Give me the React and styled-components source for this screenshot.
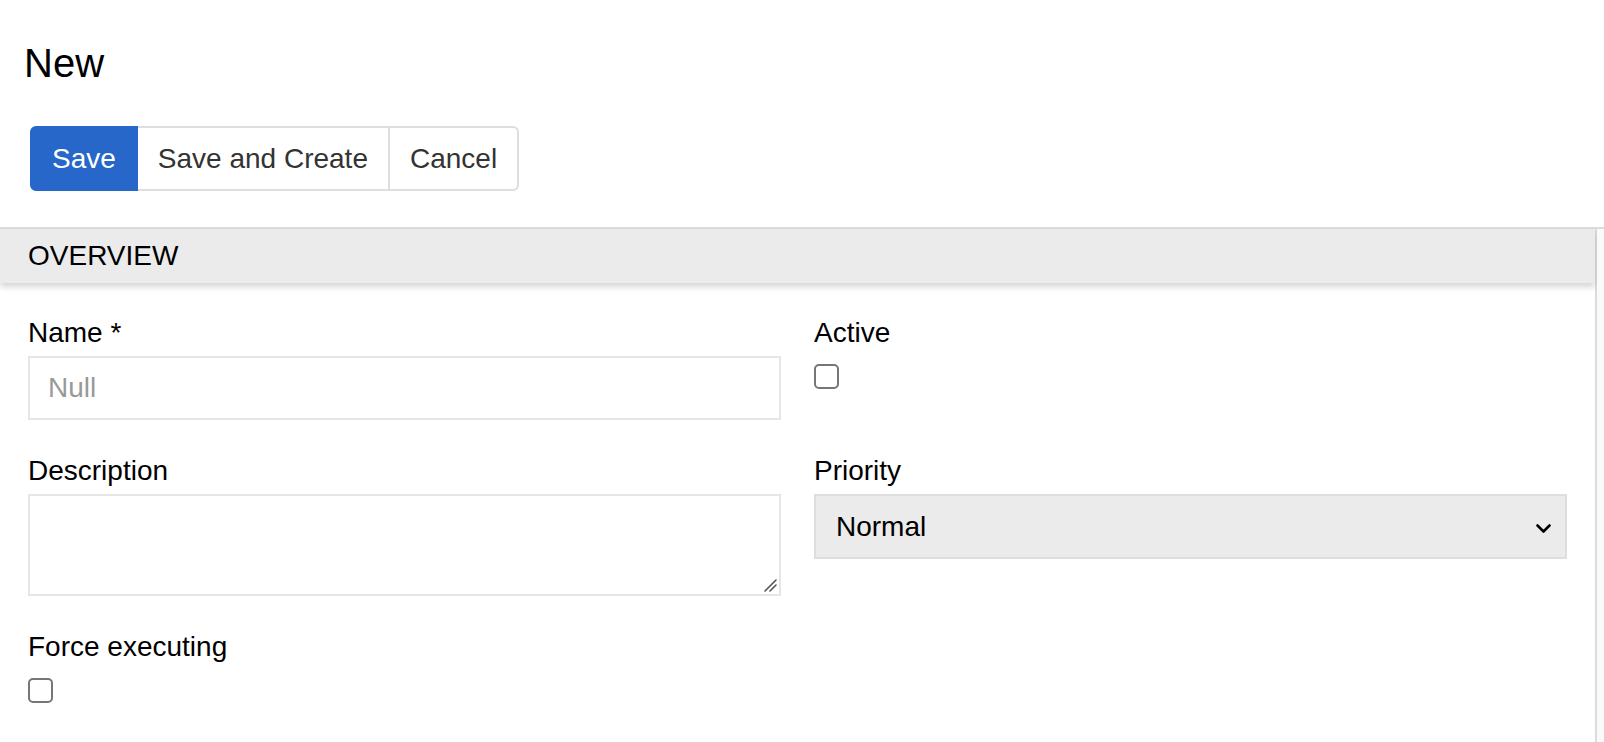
import React from 'react';
import styled, { createGlobalStyle } from 'styled-components';

const GlobalStyle = createGlobalStyle`
  html, body {
    margin: 0;
    padding: 0;
    background: #fff;
  }
  body {
    font-family: "Liberation Sans", Arial, Helvetica, sans-serif;
    color: #000;
  }
`;

const Page = styled.div`
  display: flex;
  flex-direction: column;
  min-height: 742px;
`;

const Title = styled.h1`
  margin: 39px 0 0 24px;
  font-size: 40px;
  line-height: 48px;
  font-weight: 400;
`;

const Toolbar = styled.div`
  display: flex;
  margin: 39px 0 0 30px;
`;

const Button = styled.button`
  height: 65px;
  padding: 0 20px;
  font-family: inherit;
  font-size: 28px;
  color: ${(p) => (p.primary ? '#fff' : '#333')};
  background: ${(p) => (p.primary ? '#2767c9' : '#fff')};
  border: 2px solid ${(p) => (p.primary ? '#2767c9' : '#dedede')};
  border-left-width: ${(p) => (p.first ? '2px' : '0')};
  border-radius: 0;
  cursor: pointer;

  &:first-child {
    border-radius: 6px 0 0 6px;
  }
  &:last-child {
    border-radius: 0 6px 6px 0;
  }
`;

const Section = styled.div`
  margin-top: 36px;
  border-top: 2px solid #dcdcdc;
  display: flex;
  flex: 1;
`;

const Panel = styled.div`
  flex: 1;
  border-right: 2px solid #dcdcdc;
`;

const Gutter = styled.div`
  width: 8px;
  background: #fafafa;
`;

const SectionHeader = styled.div`
  height: 54px;
  display: flex;
  align-items: center;
  padding-left: 28px;
  background: #ebebeb;
  font-size: 28px;
  box-shadow: 0 4px 6px rgba(0, 0, 0, 0.16);
`;

const FieldGrid = styled.div`
  display: grid;
  grid-template-columns: 753px 753px;
  column-gap: 33px;
  row-gap: 34px;
  align-items: start;
  padding: 33px 28px 40px 28px;
`;

const Field = styled.div`
  display: flex;
  flex-direction: column;
  align-items: flex-start;
`;

const Label = styled.label`
  font-size: 28px;
  line-height: 34px;
  margin-bottom: 6px;
`;

const TextInput = styled.input`
  box-sizing: border-box;
  width: 100%;
  height: 64px;
  padding: 0 18px;
  font-family: inherit;
  font-size: 28px;
  border: 2px solid #e6e6e6;
  outline: none;

  &::placeholder {
    color: #999;
  }
`;

const TextAreaWrap = styled.div`
  position: relative;
  width: 100%;
`;

const TextArea = styled.textarea`
  display: block;
  box-sizing: border-box;
  width: 100%;
  height: 102px;
  padding: 12px 18px;
  font-family: inherit;
  font-size: 28px;
  border: 2px solid #e6e6e6;
  outline: none;
  resize: none;
`;

const Grip = styled.svg`
  position: absolute;
  right: 4px;
  bottom: 4px;
  width: 14px;
  height: 14px;
  pointer-events: none;
`;

const Checkbox = styled.input.attrs({ type: 'checkbox' })`
  appearance: none;
  margin: 8px 0 0 0;
  width: 25px;
  height: 25px;
  border: 2px solid #767676;
  border-radius: 5px;
  background: #fff;
`;

const SelectWrap = styled.div`
  position: relative;
  width: 100%;
`;

const Select = styled.select`
  appearance: none;
  box-sizing: border-box;
  width: 100%;
  height: 65px;
  padding: 0 20px;
  font-family: inherit;
  font-size: 28px;
  color: #000;
  background: #ebebeb;
  border: 2px solid #dedede;
  border-radius: 0;
  outline: none;
`;

const Chevron = styled.svg`
  position: absolute;
  right: 15px;
  top: 50%;
  width: 17px;
  height: 11px;
  margin-top: -4px;
  pointer-events: none;
`;

export default function App() {
  return (
    <Page>
      <GlobalStyle />
      <Title>New</Title>
      <Toolbar>
        <Button primary first>Save</Button>
        <Button>Save and Create</Button>
        <Button>Cancel</Button>
      </Toolbar>
      <Section>
        <Panel>
          <SectionHeader>OVERVIEW</SectionHeader>
          <FieldGrid>
            <Field>
              <Label>Name *</Label>
              <TextInput placeholder="Null" />
            </Field>
            <Field>
              <Label>Active</Label>
              <Checkbox />
            </Field>
            <Field>
              <Label>Description</Label>
              <TextAreaWrap>
                <TextArea />
                <Grip viewBox="0 0 14 14">
                  <path d="M2 13 L13 2 M7 13 L13 7" fill="none" stroke="#555" strokeWidth="1.6" strokeLinecap="round" />
                </Grip>
              </TextAreaWrap>
            </Field>
            <Field>
              <Label>Priority</Label>
              <SelectWrap>
                <Select defaultValue="Normal">
                  <option>Low</option>
                  <option>Normal</option>
                  <option>High</option>
                </Select>
                <Chevron viewBox="0 0 17 11">
                  <path d="M2.5 2.5 L8.5 8.5 L14.5 2.5" fill="none" stroke="#000" strokeWidth="2.6" strokeLinecap="round" strokeLinejoin="round" />
                </Chevron>
              </SelectWrap>
            </Field>
            <Field>
              <Label>Force executing</Label>
              <Checkbox />
            </Field>
          </FieldGrid>
        </Panel>
        <Gutter />
      </Section>
    </Page>
  );
}
